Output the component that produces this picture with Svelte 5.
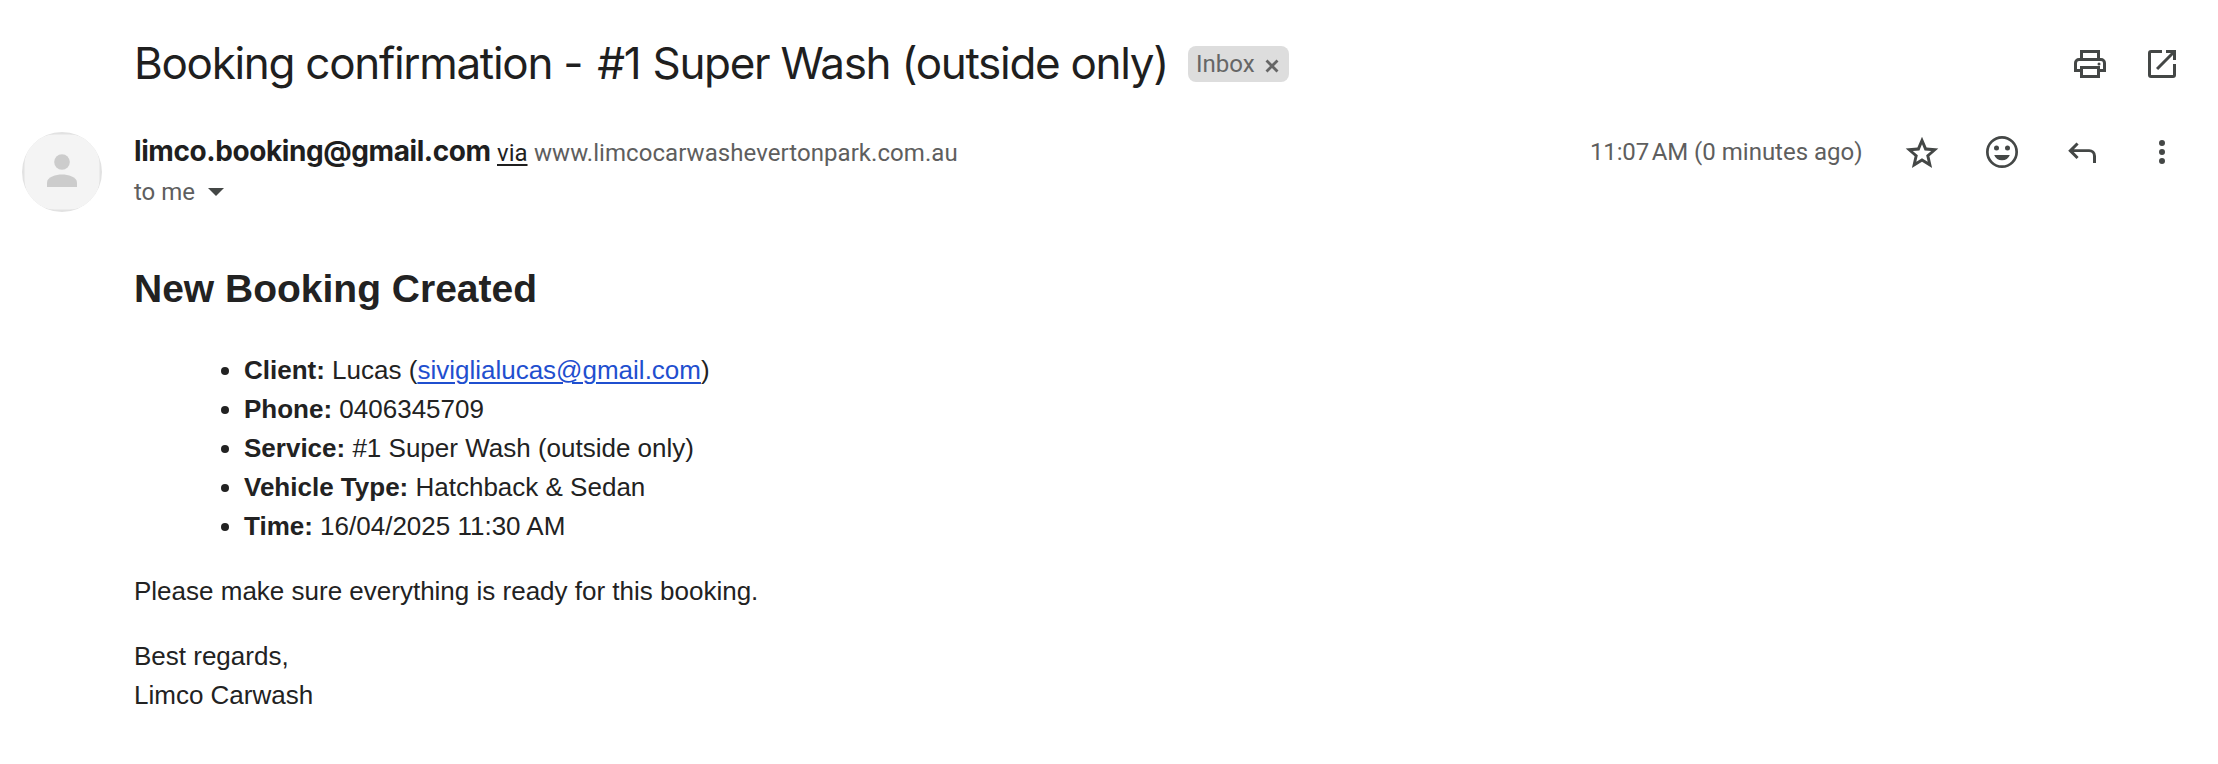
<script>
  const icons = {
    print: 'M5 3h10v4h.5A2.5 2.5 0 0 1 18 9.5V14h-3v3H5v-3H2V9.5A2.5 2.5 0 0 1 4.5 7H5zm1.5 1.5V7h7V4.500zM3.500 12.500H5V11h10v1.500h1.500v-3a1 1 0 0 0-1-1h-11a1 1 0 0 0-1 1zm3 0v3h7v-3zM14.500 9.250a.75.75 0 1 0 0 1.500a.75.75 0 0 0 0-1.500z',
    open: 'M4.500 17A1.500 1.500 0 0 1 3 15.500v-11A1.500 1.500 0 0 1 4.500 3H10v1.500H4.500v11h11V10H17v5.500a1.500 1.500 0 0 1-1.500 1.500zM8.060 13L7 11.940l7.440-7.440H12V3h5v5h-1.500V5.560z',
    star: 'M10 2.350l2.300 5.450 5.850.500-4.450 3.880 1.350 5.770L10 14.870l-5.050 3.080 1.350-5.770L1.850 8.300l5.850-.500zM10 6.150L8.700 9.200l-3.300.290 2.510 2.180-.760 3.240L10 13.180l2.850 1.730-.760-3.240 2.510-2.180-3.300-.290z',
    smile: 'M10 2a8 8 0 1 0 0 16a8 8 0 0 0 0-16zm0 1.350a6.650 6.650 0 1 1 0 13.300a6.650 6.650 0 0 1 0-13.300zM7.250 6.750a1.250 1.250 0 1 0 0 2.500a1.250 1.250 0 0 0 0-2.500zm5.500 0a1.250 1.250 0 1 0 0 2.500a1.250 1.250 0 0 0 0-2.500zM6.100 11.500h7.800a4.180 4.180 0 0 1-7.800 0z',
    reply: 'M15.500 15.500V12A2 2 0 0 0 13.500 10H5.870l2.440 2.440L7.250 13.500L3.100 9.350L7.250 5.200l1.060 1.060L5.970 8.600H13.500A3.400 3.400 0 0 1 17 12v3.500z',
    more: 'M10 4a1.500 1.500 0 1 0 0 3a1.500 1.500 0 0 0 0-3zm0 4.500a1.500 1.500 0 1 0 0 3a1.500 1.500 0 0 0 0-3zm0 4.500a1.500 1.500 0 1 0 0 3a1.500 1.500 0 0 0 0-3z'
  };
  const details = [
    ['Phone:', '0406345709'],
    ['Service:', '#1 Super Wash (outside only)'],
    ['Vehicle Type:', 'Hatchback & Sedan'],
    ['Time:', '16/04/2025 11:30 AM']
  ];
</script>

{#snippet icon(name, label)}
  <button class="icon" aria-label={label}>
    <svg viewBox="0 0 20 20" width="40" height="40"><path fill-rule="evenodd" d={icons[name]} /></svg>
  </button>
{/snippet}

<main>
  <header class="subject">
    <h1>Booking confirmation - <span class="num">#1</span> Super Wash (outside only)</h1>
    <span class="chip">
      <span>Inbox</span>
      <svg viewBox="0 0 14 14" width="14" height="14"><path d="M1.500 1.500l11 11m0-11l-11 11" /></svg>
    </span>
    <div class="tools">
      {@render icon('print', 'Print all')}
      {@render icon('open', 'In new window')}
    </div>
  </header>

  <section class="sender">
    <svg class="avatar" viewBox="0 0 80 80" width="80" height="80">
      <clipPath id="round"><circle cx="40" cy="40" r="40" /></clipPath>
      <g clip-path="url(#round)">
        <rect width="80" height="80" fill="#e2e2e2" />
        <rect x="2.500" y="2.500" width="75" height="75" rx="30" fill="#f4f4f4" />
      </g>
      <circle cx="40" cy="30" r="7.800" fill="#ccc" />
      <path d="M25 55v-4.500c0-5.500 9-8 15-8s15 2.500 15 8V55z" fill="#ccc" />
    </svg>
    <div class="who">
      <div class="from">
        <strong>limco.booking@gmail.com</strong>
        <span class="via">via</span>
        <span class="domain">www.limcocarwashevertonpark.com.au</span>
      </div>
      <div class="to">
        <span>to me</span>
        <svg viewBox="0 0 16 8" width="16" height="8"><path d="M0 0h16L8 8z" /></svg>
      </div>
    </div>
    <div class="meta">
      <time><span class="clock">11:07 AM</span> (0 minutes ago)</time>
      <div class="actions">
        {@render icon('star', 'Star')}
        {@render icon('smile', 'Add reaction')}
        {@render icon('reply', 'Reply')}
        {@render icon('more', 'More')}
      </div>
    </div>
  </section>

  <article>
    <h2>New Booking Created</h2>
    <ul>
      <li><b>Client:</b> Lucas (<a href="mailto:siviglialucas@gmail.com">siviglialucas@gmail.com</a>)</li>
      {#each details as [label, value]}
        <li><b>{label}</b> {value}</li>
      {/each}
    </ul>
    <p>Please make sure everything is ready for this booking.</p>
    <p>Best regards,<br />Limco Carwash</p>
  </article>
</main>

<style>
  :global(body) { background: #fff; }
  main {
    box-sizing: border-box;
    height: 764px;
    overflow: hidden;
    padding: 36px 36px 0 22px;
    color: #1f1f1f;
    font-family: Roboto, sans-serif;
    font-size: 24px;
  }
  .icon {
    display: block;
    border: 0;
    padding: 0;
    background: none;
    width: 40px;
    height: 40px;
  }
  .icon svg { display: block; fill: #444746; }

  .subject {
    display: flex;
    align-items: center;
    height: 56px;
    padding-left: 112px;
  }
  h1 {
    margin: 0;
    padding-bottom: 1px;
    font: 400 44px/55px Inter, sans-serif;
    letter-spacing: -1.3px;
    white-space: nowrap;
    width: 1054px;
  }
  .num { margin: 0 1px 0 4px; }
  .chip {
    display: flex;
    align-items: center;
    gap: 10px;
    box-sizing: border-box;
    width: 101px;
    height: 36px;
    padding-left: 8px;
    border-radius: 8px;
    background: #ddd;
    color: #666;
    line-height: 36px;
  }
  .chip span { height: 36px; }
  .chip svg { margin-top: 3px; fill: none; stroke: #666; stroke-width: 2.800; }
  .tools { display: flex; gap: 32px; margin-left: auto; }

  .sender { display: flex; margin-top: 40px; height: 80px; }
  .avatar { display: block; flex: none; }
  .who { margin-left: 32px; }
  .from { display: flex; align-items: baseline; height: 40px; line-height: 38px; white-space: nowrap; }
  strong { font: 700 28px/38px Inter, sans-serif; letter-spacing: -0.42px; width: 363px; }
  .via { text-decoration: underline; text-decoration-thickness: 2px; text-underline-offset: 3px; width: 37px; }
  .domain { color: #5e5e5e; letter-spacing: 0.06px; }
  .to { display: flex; align-items: center; gap: 13px; height: 40px; color: #5e5e5e; }
  .to svg { fill: #444746; }
  .meta { display: flex; margin-left: auto; height: 40px; line-height: 40px; }
  time { color: #5e5e5e; width: 312px; white-space: nowrap; }
  .clock { letter-spacing: -0.15px; word-spacing: -3px; }
  .actions { display: flex; gap: 40px; }

  article {
    margin: 48px 0 0 112px;
    color: #222;
    font: 26px/39px "Liberation Sans", Arial, sans-serif;
  }
  h2 { margin: 0; font-size: 39px; line-height: 58.5px; }
  ul { margin: 32.500px 0 0; padding: 0 0 0 110px; }
  li { list-style: disc; }
  a { color: #1f4fcf; text-decoration: underline; text-decoration-thickness: 2px; text-underline-offset: 3px; }
  p { margin: 26px 0 0; }
</style>
